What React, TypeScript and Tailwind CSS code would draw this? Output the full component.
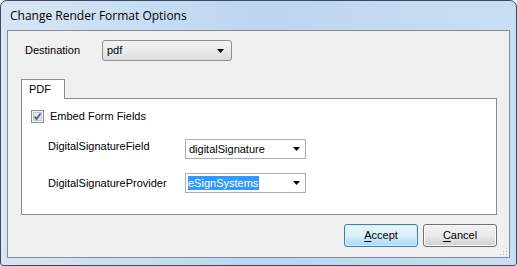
import React from 'react';

function Arrow() {
  return (
    <svg width="7" height="4" viewBox="0 0 7 4" className="shrink-0">
      <path d="M0 0 H7 L3.5 4 Z" fill="#000" />
    </svg>
  );
}

function Combo({ value, selected }: { value: string; selected?: boolean }) {
  return (
    <div className="flex h-[20px] w-[121px] items-center justify-between border border-[#abadb3] bg-white pl-[2px] pr-[5px]">
      <span
        className={
          selected
            ? 'bg-[#3399ff] pr-[1px] text-white leading-[14px]'
            : 'text-black leading-[14px] pl-[1px]'
        }
      >
        {value}
      </span>
      <Arrow />
    </div>
  );
}

function Button({ label, isDefault }: { label: string; isDefault?: boolean }) {
  return (
    <button
      className={`flex h-[23px] w-[74px] items-center justify-center rounded-[3px] border text-[11px] text-black ${
        isDefault
          ? 'border-[#3c7fb1] bg-gradient-to-b from-[#eaf6fd] via-[#d9f0fc] to-[#a7d9f5] shadow-[inset_0_0_0_1px_#d6edf9]'
          : 'border-[#707070] bg-gradient-to-b from-[#f2f2f2] via-[#ebebeb] to-[#cfcfcf] shadow-[inset_0_0_0_1px_#fcfcfc]'
      }`}
    >
      <span>
        <span className="underline underline-offset-[2px]">{label[0]}</span>
        {label.slice(1)}
      </span>
    </button>
  );
}

export default function App() {
  return (
    <div className="h-[266px] w-[517px] bg-white">
      <div
        className="flex h-[266px] w-[517px] flex-col rounded-t-[7px] rounded-b-[3px] border border-[#3c4a5c] bg-gradient-to-r from-[#d7e6f5] via-[#bcd6f0] to-[#c9def3]"
        style={{ fontFamily: '"Liberation Sans", Arial, sans-serif' }}
      >
        <div
          className="flex h-[29px] shrink-0 items-center pl-[9px] pt-[1px] text-[12px] text-black"
          style={{ fontFamily: '"Open Sans", "Noto Sans", sans-serif' }}
        >
          Change Render Format Options
        </div>
        <div className="mx-[6px] flex h-[228px] flex-col border border-[#7f8c9b] bg-[#f0f0f0] text-[11px] text-black">
          <div className="mt-[9px] flex h-[21px] items-center pl-[17px]">
            <span className="w-[77px]">Destination</span>
            <div className="flex h-[21px] w-[130px] items-center justify-between rounded-[3px] border border-[#8e8f8f] bg-gradient-to-b from-[#f2f2f2] via-[#ebebeb] to-[#dcdcdc] pl-[4px] pr-[7px]">
              <span>pdf</span>
              <Arrow />
            </div>
          </div>

          <div className="ml-[13px] mr-[12px] mt-[18px] flex flex-col">
            <div className="relative z-10 -mb-px flex h-[20px] w-[44px] items-center border border-b-0 border-[#898c95] bg-white pl-[7px] text-[11px]">
              PDF
            </div>
            <div className="flex h-[117px] flex-col border border-[#898c95] bg-white leading-[13px]">
              <div className="ml-[9px] mt-[11px] flex h-[13px] items-center gap-[6px]">
                <svg width="13" height="13" viewBox="0 0 13 13">
                  <rect x="0.5" y="0.5" width="12" height="12" fill="#f4f4f4" stroke="#8e8f8f" />
                  <rect x="2.5" y="2.5" width="8" height="8" fill="#dfe6ee" stroke="#c3c8d0" />
                  <path d="M3.5 6.5 L5.5 9 L9.5 3.5" fill="none" stroke="#4a5f97" strokeWidth="1.8" />
                </svg>
                <span>Embed Form Fields</span>
              </div>
              <div className="ml-[26px] mt-[16px] flex h-[20px] items-center">
                <span className="-mt-[5px] w-[137px]">DigitalSignatureField</span>
                <Combo value="digitalSignature" />
              </div>
              <div className="ml-[26px] mt-[14px] flex h-[20px] items-center">
                <span className="w-[137px]">DigitalSignatureProvider</span>
                <Combo value="eSignSystems" selected />
              </div>
            </div>
          </div>

          <div className="relative mr-[12px] mt-[9px] flex justify-end gap-[5px]">
            <Button label="Accept" isDefault />
            <Button label="Cancel" />
          </div>
          <div className="relative flex-1">
            <svg width="9" height="9" viewBox="0 0 9 9" className="absolute bottom-[1px] right-[1px]">
              {[
                [7, 1],
                [4, 4],
                [7, 4],
                [1, 7],
                [4, 7],
                [7, 7],
              ].map(([x, y]) => (
                <rect key={`${x}-${y}`} x={x} y={y} width="1" height="1" fill="#b6b6b6" />
              ))}
            </svg>
          </div>
        </div>
      </div>
    </div>
  );
}
